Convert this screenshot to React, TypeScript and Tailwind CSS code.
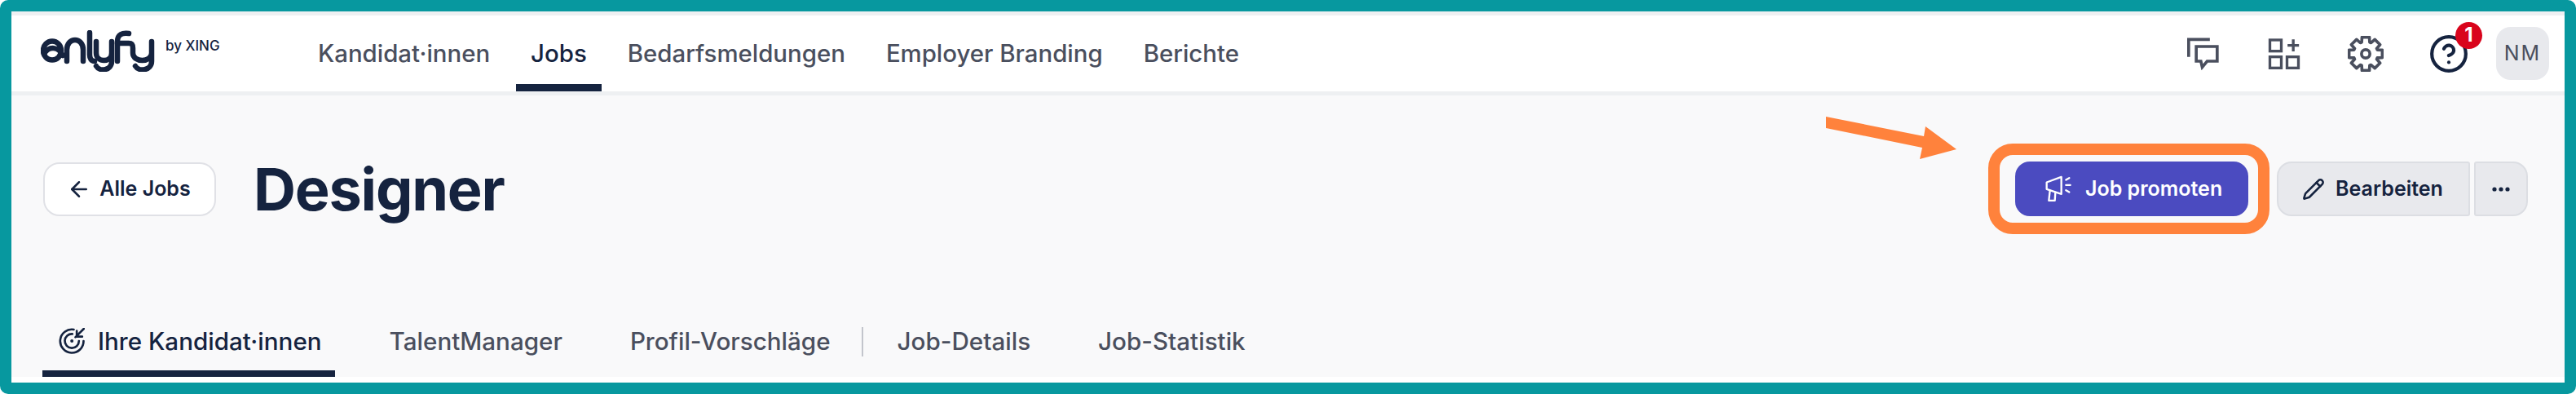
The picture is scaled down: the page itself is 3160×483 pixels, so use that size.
import { ArrowLeft, CircleHelp, Pencil } from "lucide-react";

function gearPath() {
  const pts: string[] = [];
  const cx = 60, cy = 60;
  for (let i = 0; i < 8; i++) {
    const a = (i * Math.PI) / 4 - Math.PI / 2;
    const step = Math.PI / 4;
    const list: [number, number][] = [
      [a - step * 0.28, 57],
      [a + step * 0.28, 57],
      [a + step * 0.42, 41],
      [a + step * 0.58, 41],
    ];
    list.forEach(([t, r]) => {
      pts.push(`${(cx + r * Math.cos(t)).toFixed(1)},${(cy + r * Math.sin(t)).toFixed(1)}`);
    });
  }
  return pts.join(" ");
}

function Logo() {
  return (
    <svg width="141" height="51" viewBox="0 0 141 51" fill="none" stroke="#15233f" strokeWidth="6.5" strokeLinecap="round" strokeLinejoin="round" className="shrink-0">
      <ellipse cx="14" cy="25" rx="11" ry="11.5" />
      <path d="M4 29 C10 19 22 20 27 31" />
      <path d="M32 38 L32 24 C32 8 52 8 52 24 L52 38" />
      <path d="M60 3 L60 30 C60 35 62 38 66 38" />
      <path d="M68 14 L68 28 C68 40 87 40 87 28 L87 14 L87 38 C87 50 72 51 68 44" />
      <path d="M94 38 L94 14 C94 5 100 3 108 4" />
      <path d="M94 16 L108 16 C112 16 113 18 113 22 L113 28 C113 40 136 40 136 28 L136 14 L136 38 C136 50 120 51 116 44" />
    </svg>
  );
}

function ChatIcon() {
  return (
    <svg width="41" height="40" viewBox="130 75 122 120" fill="none" stroke="#4a4f5e" strokeWidth="11">
      <path d="M138 146 L138 82 L216 82" />
      <path d="M166 108 L243 108 L243 162 L206 162 L188 184 L183 162 L166 162 Z" />
    </svg>
  );
}

function GridPlusIcon() {
  return (
    <svg width="42" height="40" viewBox="430 78 125 120" fill="none" stroke="#4a4f5e" strokeWidth="10">
      <rect x="440" y="87" width="42" height="41" />
      <rect x="440" y="149" width="42" height="41" />
      <rect x="503" y="149" width="42" height="41" />
      <path d="M505 107 L547 107 M526 85 L526 129" />
    </svg>
  );
}

function GearIcon() {
  return (
    <svg width="44" height="44" viewBox="0 0 120 120" fill="none" stroke="#4a4f5e" strokeWidth="10" strokeLinejoin="round">
      <polygon points={gearPath()} />
      <circle cx="60" cy="60" r="14" />
    </svg>
  );
}

function Megaphone() {
  return (
    <svg width="34" height="33" viewBox="326 140 102 98" fill="none" stroke="#ffffff" strokeWidth="7" strokeLinejoin="round" strokeLinecap="round">
      <path d="M334 165 L388 145 L388 208 L334 190 Z" />
      <path d="M346 195 L342 232 L364 232 L366 202" />
      <path d="M405 156 L417 149 M405 175 L421 175 M405 194 L417 201" />
    </svg>
  );
}

function TargetIcon() {
  return (
    <svg width="32" height="32" viewBox="95 70 95 96" fill="none" stroke="#15233f" strokeWidth="8" strokeLinecap="round" strokeLinejoin="round" className="shrink-0">
      <path d="M150 76 A43 43 0 1 0 186 118" />
      <path d="M145 92 A26 26 0 1 0 169 118" />
      <circle cx="143" cy="118" r="6" fill="#15233f" stroke="none" />
      <path d="M156 104 L187 73 M161 81 L161 102 L181 102" />
    </svg>
  );
}

const nav = [
  { label: "Kandidat·innen", active: false },
  { label: "Jobs", active: true },
  { label: "Bedarfsmeldungen", active: false },
  { label: "Employer Branding", active: false },
  { label: "Berichte", active: false },
];

export default function App() {
  return (
    <div className="relative flex h-[483px] w-[3160px] flex-col overflow-hidden rounded-[10px] border-[14px] border-[#07989f] bg-white font-['Inter',sans-serif]">
      <div className="h-[5px] bg-[#eef0f2]" />
      <header className="flex h-[93px] items-stretch bg-white pl-[36px] pr-[19px]">
        <div className="flex w-[322px] items-start pt-[18px]">
          <Logo />
          <span className="ml-[12px] mt-[9px] text-[17px] font-medium leading-[20px] text-[#15233f]">by XING</span>
        </div>
        <nav className="flex gap-[14px]">
          {nav.map((n) => (
            <a
              key={n.label}
              className={`flex items-center border-b-[9px] px-[18px] pt-[11px] text-[29.4px] font-medium ${
                n.active ? "border-[#15233f] text-[#15233f]" : "border-transparent text-[#4a4f5e]"
              }`}
            >
              {n.label}
            </a>
          ))}
        </nav>
        <div className="ml-auto flex items-center">
          <div className="flex w-[100px] justify-center"><ChatIcon /></div>
          <div className="flex w-[100px] justify-center"><GridPlusIcon /></div>
          <div className="flex w-[100px] justify-center"><GearIcon /></div>
          <div className="relative flex w-[100px] justify-center pl-[3px]">
            <CircleHelp size={50} strokeWidth={2} color="#15233f" />
            <span className="absolute left-[60px] top-[-14px] flex h-[33px] w-[33px] items-center justify-center rounded-full bg-[#d9041c] text-[24px] font-bold text-white">1</span>
          </div>
          <div className="ml-[10px] flex h-[65px] w-[65px] items-center justify-center rounded-[18px] bg-[#e8e9ed] text-[25px] tracking-[2px] text-[#4a4f5e]">NM</div>
        </div>
      </header>
      <div className="h-[5px] bg-[#eef0f2]" />
      <main className="flex flex-1 flex-col bg-[#f9f9fa]">
        <div className="mt-[59px] flex items-center pl-[39px] pr-[45px]">
          <button className="flex h-[66px] w-[212px] items-center justify-center gap-[10px] rounded-[20px] border-2 border-[#e0e1e6] bg-white pr-[2px] text-[25px] font-semibold text-[#15233f]">
            <ArrowLeft size={30} strokeWidth={2} />
            Alle Jobs
          </button>
          <h1 className="ml-[46px] text-[72px] font-bold leading-none tracking-[-1.2px] text-[#15233f]">Designer</h1>
          <div className="ml-auto rounded-[30px] border-[14px] border-[#ff823c] py-[8px] pl-[19px] pr-[12px]">
            <button className="flex h-[67px] w-[286px] items-center justify-start gap-[16px] rounded-[18px] bg-[#4b4bc0] pl-[36px] text-[25px] font-semibold text-white">
              <Megaphone />
              Job promoten
            </button>
          </div>
          <div className="ml-[9px] flex gap-[5px]">
            <button className="flex h-[67px] w-[237px] items-center justify-center gap-[13px] rounded-l-[18px] rounded-r-[3px] border-2 border-[#dcdee3] bg-[#e8e9ed] pr-[2px] text-[25px] font-semibold text-[#15233f]">
              <Pencil size={28} strokeWidth={2.2} />
              Bearbeiten
            </button>
            <button className="flex h-[67px] w-[66px] items-center justify-center rounded-l-[3px] rounded-r-[18px] border-2 border-[#dcdee3] bg-[#e8e9ed] text-[24px] font-bold leading-none text-[#15233f]">
              <svg width="22" height="6" viewBox="0 0 22 6" fill="#15233f"><circle cx="3" cy="3" r="2.6" /><circle cx="11" cy="3" r="2.6" /><circle cx="19" cy="3" r="2.6" /></svg>
            </button>
          </div>
        </div>
        <div className="mt-auto flex h-[82px] items-stretch pl-[38px] text-[29.6px] font-medium text-[#4a4f5e]">
          <div className="flex gap-[43px]">
            <a className="mr-[4px] flex items-center gap-[16px] border-b-8 border-[#15233f] pl-[20px] pr-[16px] pt-[2px] text-[#15233f]">
              <TargetIcon />
              Ihre Kandidat·innen
            </a>
            <a className="flex items-center border-b-8 border-transparent px-[20px] pt-[2px]">TalentManager</a>
            <a className="flex items-center border-b-8 border-transparent px-[20px] pt-[2px]">Profil-Vorschläge</a>
          </div>
          <div className="ml-[18px] mr-[22px] mb-[25px] mt-[21px] w-[2px] bg-[#c3c5cc]" />
          <div className="flex gap-[43px]">
            <a className="flex items-center border-b-8 border-transparent px-[20px] pt-[2px]">Job-Details</a>
            <a className="flex items-center border-b-8 border-transparent px-[20px] pt-[2px]">Job-Statistik</a>
          </div>
        </div>
      </main>
      <div className="h-[7px] bg-white" />
      <svg className="absolute left-[2226px] top-[129px]" width="162" height="54" viewBox="2240 143 162 54" fill="#ff823c">
        <polygon points="2240,143 2240,157 2358,181 2355,195 2400,183 2362,155 2360,167" />
      </svg>
    </div>
  );
}
